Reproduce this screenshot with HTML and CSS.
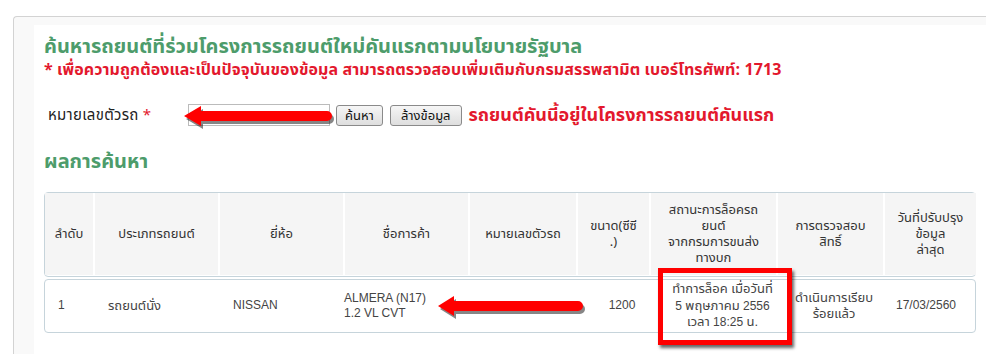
FILE: index.html
```html
<!DOCTYPE html>
<html lang="th">
<head>
    <meta charset="UTF-8">
    <title>ค้นหารถยนต์คันแรก</title>
    <link rel="stylesheet" href="styles.css">
</head>
<body>
    <div class="page">
        <div class="panel">
            <h2 class="title">ค้นหารถยนต์ที่ร่วมโครงการรถยนต์ใหม่คันแรกตามนโยบายรัฐบาล</h2>
            <p class="note">* เพื่อความถูกต้องและเป็นปัจจุบันของข้อมูล สามารถตรวจสอบเพิ่มเติมกับกรมสรรพสามิต เบอร์โทรศัพท์: 1713</p>

            <div class="search-row">
                <label class="search-label">หมายเลขตัวรถ <span class="req">*</span></label>
                <input type="text" class="search-input" value="">
                <button class="btn">ค้นหา</button>
                <button class="btn">ล้างข้อมูล</button>
                <span class="result-msg">รถยนต์คันนี้อยู่ในโครงการรถยนต์คันแรก</span>
            </div>

            <h2 class="title results-title">ผลการค้นหา</h2>

            <div class="grid-head">
                <div class="th">ลำดับ</div>
                <div class="th">ประเภทรถยนต์</div>
                <div class="th">ยี่ห้อ</div>
                <div class="th">ชื่อการค้า</div>
                <div class="th">หมายเลขตัวรถ</div>
                <div class="th">ขนาด(ซีซี<br>.)</div>
                <div class="th">สถานะการล็อครถ<br>ยนต์<br>จากกรมการขนส่ง<br>ทางบก</div>
                <div class="th">การตรวจสอบ<br>สิทธิ์</div>
                <div class="th">วันที่ปรับปรุง<br>ข้อมูล<br>ล่าสุด</div>
            </div>

            <div class="grid-row">
                <div class="td">1</div>
                <div class="td"><span class="th-text">รถยนต์นั่ง</span></div>
                <div class="td">NISSAN</div>
                <div class="td">ALMERA (N17)<br>1.2 VL CVT</div>
                <div class="td"></div>
                <div class="td center">1200</div>
                <div class="td center"><span class="th-text">ทำการล็อค เมื่อวันที่</span><br>5 <span class="th-text">พฤษภาคม</span> 2556<br><span class="th-text">เวลา</span> 18:25 <span class="th-text">น.</span></div>
                <div class="td center"><span class="th-text">ดำเนินการเรียบ<br>ร้อยแล้ว</span></div>
                <div class="td center">17/03/2560</div>
            </div>

            <!-- annotations drawn on top of the screenshot -->
            <div class="mark-box"></div>
            <svg class="arrow arrow-1" width="160" height="30" viewBox="0 0 160 30">
                <path d="M2 13 L19 3 L19 8 L145 8 A5 5 0 0 1 145 18 L19 18 L19 23 Z" fill="#222" opacity="0.55" transform="translate(2 3)"/>
                <path d="M2 13 L19 3 L19 8 L145 8 A5 5 0 0 1 145 18 L19 18 L19 23 Z" fill="#f00"/>
            </svg>
            <svg class="arrow arrow-2" width="160" height="30" viewBox="0 0 160 30">
                <path d="M2 13 L18 3 L18 8 L142 8 A5 5 0 0 1 142 18 L18 18 L18 23 Z" fill="#222" opacity="0.55" transform="translate(2 3)"/>
                <path d="M2 13 L18 3 L18 8 L142 8 A5 5 0 0 1 142 18 L18 18 L18 23 Z" fill="#f00"/>
            </svg>
        </div>
    </div>
</body>
</html>
```

FILE: styles.css
```css
body {
    margin: 0;
    background-color: #fff;
    font-family: Tahoma, "Noto Sans Thai", "Noto Sans", "DejaVu Sans", sans-serif;
    color: #333;
}
.page {
    margin: 16px 0 0 13px;
    padding: 8px 0 0 20px;
    min-height: 330px;
    border: 1px solid #d3d3d3;
    border-right: none;
    border-bottom: none;
    border-radius: 4px 0 0 0;
    background-color: #f9f9f9;
}
.panel {
    position: relative;
    background-color: #fff;
    padding: 10px 10px 20px 10px;
    min-height: 300px;
}
.title {
    margin: 0;
    font-size: 20px;
    line-height: 24px;
    font-weight: bold;
    color: #4d9c6b;
}
.note {
    margin: 0;
    font-size: 16px;
    line-height: 22px;
    font-weight: bold;
    color: #e3182d;
    letter-spacing: 0.1px;
}
.search-row {
    display: flex;
    align-items: center;
    height: 24px;
    margin-top: 22px;
    padding-left: 4px;
}
.search-label {
    width: 140px;
    font-size: 15px;
    letter-spacing: 0.3px;
    color: #222;
}
.req {
    color: #e3182d;
}
.search-input {
    width: 136px;
    height: 18px;
    padding: 1px 2px;
    border: 1px solid #bbb;
    font-size: 12px;
}
.btn {
    height: 21px;
    margin-left: 6px;
    padding: 0 8px;
    font-family: inherit;
    font-size: 13px;
    color: #111;
    border: 1px solid #8a8a8a;
    border-radius: 3px;
    background: linear-gradient(#f6f6f6, #dedede);
}
.btn + .btn {
    margin-left: 7px;
    padding: 0 10px;
}
.result-msg {
    margin-left: 7px;
    font-size: 18px;
    font-weight: bold;
    color: #e3182d;
}
.results-title {
    margin-top: 23px;
}
.grid-head,
.grid-row {
    display: grid;
    border: 1px solid #c6d4db;
    border-radius: 4px;
}
.grid-head {
    margin-top: 18px;
    grid-template-columns: 48px 123px 123px 123px 106px 71px 125px 105px 91px;
    column-gap: 2px;
    padding-bottom: 1px;
}
.th {
    display: flex;
    align-items: center;
    justify-content: center;
    min-height: 82px;
    padding: 0 2px;
    background-color: #f5f5f5;
    font-size: 13px;
    line-height: 16px;
    color: #333;
    text-align: center;
}
.grid-row {
    margin-top: 2px;
    grid-template-columns: 50px 125px 111px 139px 120px 64px 137px 86px 1fr;
    height: 52px;
    align-items: center;
    font-family: Arial, "Liberation Sans", Tahoma, "Noto Sans Thai", sans-serif;
}
.td {
    padding-left: 13px;
    font-size: 12px;
    line-height: 15.5px;
    color: #444;
}
.td.center {
    padding-left: 0;
    text-align: center;
}
.th-text {
    font-size: 13px;
}
.mark-box {
    position: absolute;
    left: 624px;
    top: 243px;
    width: 124px;
    height: 67px;
    border: 5px solid #f00;
    box-shadow: 2px 3px 3px rgba(0, 0, 0, 0.6);
}
.arrow {
    position: absolute;
}
.arrow-1 {
    left: 148px;
    top: 78px;
}
.arrow-2 {
    left: 402px;
    top: 268px;
}
```
